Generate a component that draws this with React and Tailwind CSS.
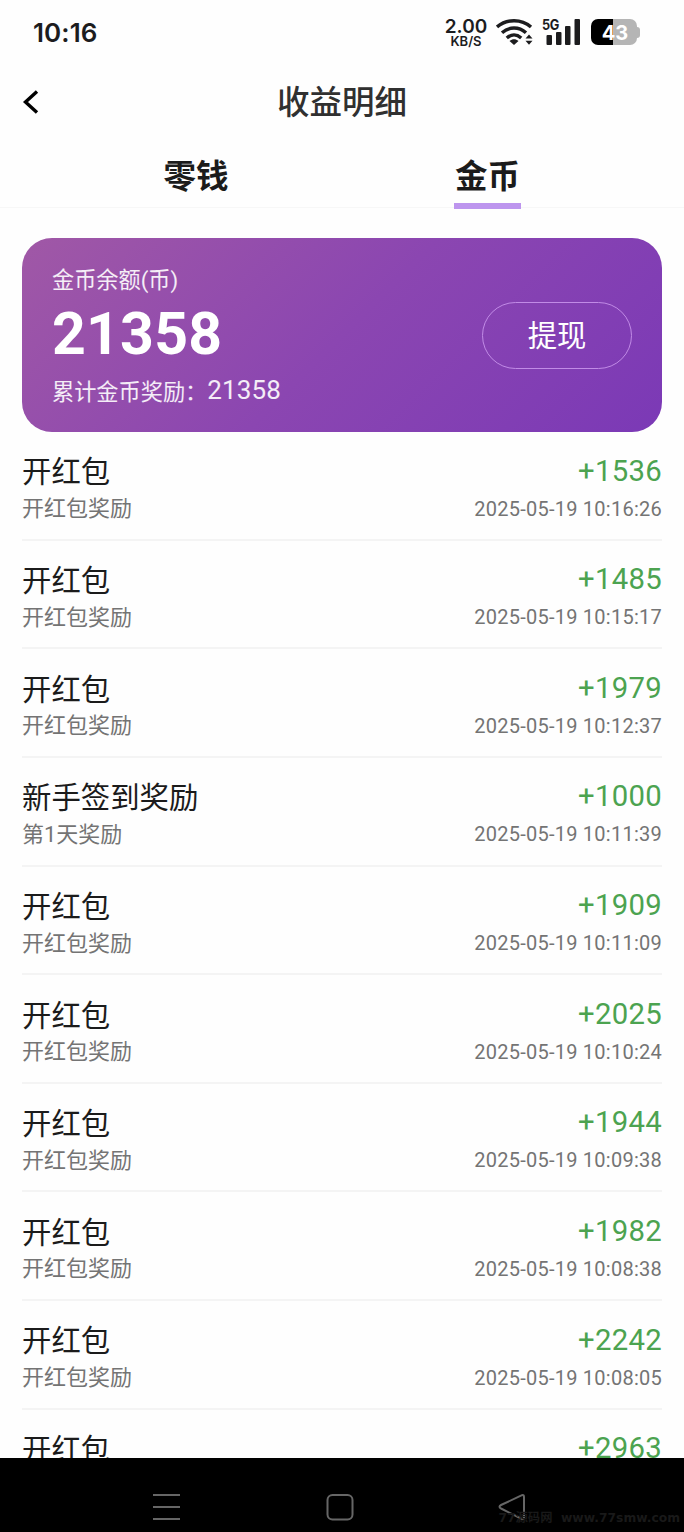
const records = [
  { title: "开红包", note: "开红包奖励", amount: "+1536", time: "2025-05-19 10:16:26" },
  { title: "开红包", note: "开红包奖励", amount: "+1485", time: "2025-05-19 10:15:17" },
  { title: "开红包", note: "开红包奖励", amount: "+1979", time: "2025-05-19 10:12:37" },
  { title: "新手签到奖励", note: "第1天奖励", amount: "+1000", time: "2025-05-19 10:11:39" },
  { title: "开红包", note: "开红包奖励", amount: "+1909", time: "2025-05-19 10:11:09" },
  { title: "开红包", note: "开红包奖励", amount: "+2025", time: "2025-05-19 10:10:24" },
  { title: "开红包", note: "开红包奖励", amount: "+1944", time: "2025-05-19 10:09:38" },
  { title: "开红包", note: "开红包奖励", amount: "+1982", time: "2025-05-19 10:08:38" },
  { title: "开红包", note: "开红包奖励", amount: "+2242", time: "2025-05-19 10:08:05" },
  { title: "开红包", amount: "+2963" },
];

function WifiIcon() {
  return (
    <svg width="38" height="28" viewBox="0 0 38 28" fill="none" stroke="#1c1c1e" strokeWidth="3.400">
      <path d="M1 9C10.500 .6 25.500 .6 35 9" />
      <path d="M6 14.800C13 8.400 23 8.400 30 14.800" />
      <path d="M10.800 20C15.300 16 20.700 16 25.200 20" />
      <path d="M13.500 23C16.500 20.600 19.500 20.600 22.500 23L18 27Z" fill="#1c1c1e" stroke="none" />
      <path d="M29.500 20.500L33 16.500L36.500 20.500ZM29.500 22.800L33 26.800L36.500 22.800Z" fill="#1c1c1e" stroke="none" />
    </svg>
  );
}

function SignalIcon() {
  return (
    <div className="relative h-7 w-[38px]">
      <span className="absolute -left-px top-0 origin-left scale-x-[0.88] text-[14.500px] font-bold leading-[13px] tracking-[-0.500px]">5G</span>
      <svg width="38" height="28" viewBox="0 0 38 28" fill="#1c1c1e">
        <rect x="3.500" y="17" width="5.500" height="10" rx="1" />
        <rect x="13" y="14" width="5.500" height="13" rx="1" />
        <rect x="22" y="8" width="5.500" height="19" rx="1" />
        <rect x="31.500" y="1" width="5.500" height="26" rx="1" />
      </svg>
    </div>
  );
}

function BatteryIcon() {
  return (
    <div className="flex items-center">
      <div className="flex h-[26px] w-[46px] items-center justify-center rounded-[7px] bg-[linear-gradient(90deg,#000_47%,#b5b5b5_47%)] pl-[2px] pt-px text-[20px] font-bold leading-none text-white">
        43
      </div>
      <div className="h-[11px] w-[3px] rounded-r-[3px] bg-[#b5b5b5]" />
    </div>
  );
}

function StatusBar() {
  return (
    <div className="flex h-16 items-center justify-between pl-[33px] pr-[44px] font-['Inter',sans-serif] text-[#1c1c1e]">
      <span className="pt-px text-[26px] font-semibold leading-none tracking-[0.100px]">10:16</span>
      <div className="flex items-center">
        <div className="flex w-[42px] flex-col items-center pt-px">
          <span className="text-[19px] font-semibold leading-[16px]">2.00</span>
          <span className="text-[13px] font-semibold leading-[12px]">KB/S</span>
        </div>
        <div className="ml-[9px]"><WifiIcon /></div>
        <div className="ml-[9px]"><SignalIcon /></div>
        <div className="ml-[10px]"><BatteryIcon /></div>
      </div>
    </div>
  );
}

function Header() {
  return (
    <div className="grid h-[74px] grid-cols-[1fr_auto_1fr] items-center pl-[22px] pr-[22px]">
      <svg width="18" height="28" viewBox="0 0 18 28" fill="none" stroke="#000" strokeWidth="3.400">
        <path d="M15 4.500L3.500 15L15 25.500" />
      </svg>
      <h1 className="pt-[4px] text-[32.500px] font-medium leading-none text-[#303030]">收益明细</h1>
    </div>
  );
}

function Tabs() {
  return (
    <div className="grid h-[70px] grid-cols-2 border-b border-[#f7f7f7] pl-[51px] pr-[51px] text-[32.500px] font-bold leading-none text-[#1b1b1b]">
      <div className="flex flex-col items-center pt-[23px] pr-px">零钱</div>
      <div className="flex flex-col items-center pt-[23px]">
        <span>金币</span>
        <span className="mt-[9.500px] h-[6px] w-[67px] shrink-0 bg-[#bd95ee]" />
      </div>
    </div>
  );
}

function BalanceCard() {
  return (
    <div className="mx-[22px] mt-[30px] flex h-[194px] items-center justify-between rounded-[30px] bg-[linear-gradient(135deg,#a058a6_0%,#8b46b1_50%,#7b39b6_100%)] pl-[30px] pr-[30px] text-white">
      <div className="flex h-full flex-col pt-[26px]">
        <div className="text-[22.200px] leading-[32px] text-white/90">金币余额(币)</div>
        <div className="text-[59px] font-bold leading-[76px] tracking-[0.200px]">21358</div>
        <div className="flex items-baseline leading-[36px] text-white/90">
          <span className="relative top-px text-[22.200px]">累计金币奖励：</span>
          <span className="text-[26px] tracking-[0.100px]">21358</span>
        </div>
      </div>
      <button className="flex h-[67px] w-[150px] items-center justify-center rounded-full border-[1.500px] border-[#c18be6] pt-[3px] text-[29.300px] leading-none">
        提现
      </button>
    </div>
  );
}

function RecordRow({ record }) {
  return (
    <li className="flex h-[108.625px] shrink-0 flex-col border-b-2 border-[#f4f4f4] pt-[18px]">
      <div className="flex h-[40px] items-center justify-between">
        <span className="pt-[5px] text-[29.400px] text-[#1b1b1b]">{record.title}</span>
        <span className="pt-[3px] text-[29.300px] tracking-[0.300px] text-[#4ca350]">{record.amount}</span>
      </div>
      {record.time && (
        <div className="flex h-[36px] items-center justify-between text-[#747474]">
          <span className="pt-px text-[22px]">{record.note}</span>
          <span className="pt-px text-[20px] tracking-[0.250px]">{record.time}</span>
        </div>
      )}
    </li>
  );
}

function NavigationBar() {
  return (
    <div className="relative h-[74px] shrink-0 bg-black">
      <div className="grid h-full grid-cols-[332px_15px_337px] pt-[33px]">
        <svg className="justify-self-center" width="30" height="32" viewBox="0 0 30 32" stroke="#666" strokeWidth="2">
          <path d="M2 4H29M2 16H29M2 28H29" />
        </svg>
        <svg className="justify-self-center overflow-visible" width="15" height="32" viewBox="0 0 15 32" fill="none" stroke="#666" strokeWidth="2">
          <rect x="-4.500" y="4" width="25" height="24.500" rx="5" />
        </svg>
        <svg className="ml-[151px]" width="30" height="32" viewBox="0 0 30 32" fill="none" stroke="#666" strokeWidth="2" strokeLinejoin="round">
          <path d="M24 4.200L3 14Q0 15.500 3 17.500L24 28Q26 28.500 26 26V6Q26 3.500 24 4.200Z" />
        </svg>
      </div>
      <span className="absolute right-[4px] top-[52px] whitespace-pre font-['DejaVu_Sans','Noto_Sans_CJK_SC',sans-serif] text-[12.300px] font-bold leading-[16px] text-[#191919]">77源码网  www.77smw.com</span>
    </div>
  );
}

export default function App() {
  return (
    <div className="flex h-[1532px] w-[684px] flex-col overflow-hidden bg-[#fefefe] font-['Roboto','Noto_Sans_CJK_SC',sans-serif]">
      <StatusBar />
      <Header />
      <Tabs />
      <BalanceCard />
      <ul className="mx-[22px] flex min-h-0 flex-1 flex-col overflow-hidden">
        {records.map((record, index) => (
          <RecordRow key={index} record={record} />
        ))}
      </ul>
      <NavigationBar />
    </div>
  );
}
